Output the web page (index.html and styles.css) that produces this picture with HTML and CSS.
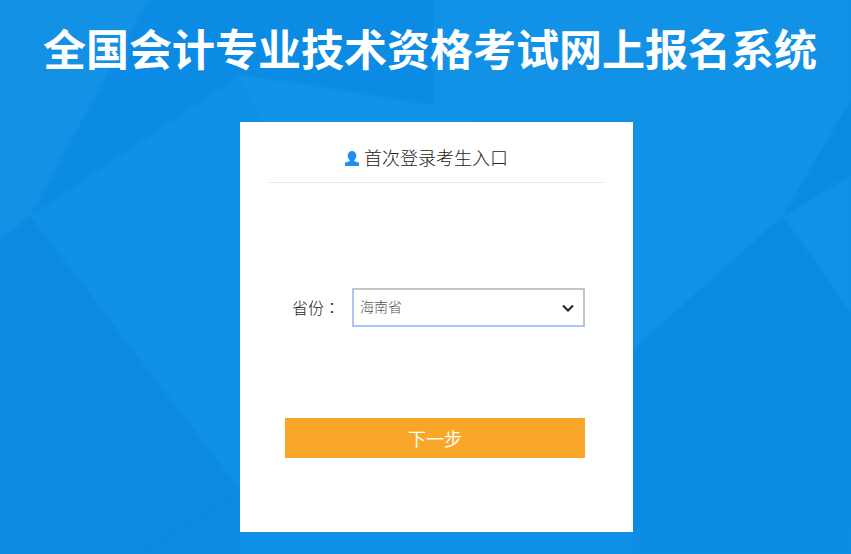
FILE: index.html
```html
<!DOCTYPE html>
<html lang="zh-CN">
<head>
  <meta charset="UTF-8">
  <title>全国会计专业技术资格考试网上报名系统</title>
  <link rel="stylesheet" href="styles.css">
</head>
<body>
  <svg class="bg" viewBox="0 0 851 554" preserveAspectRatio="none" aria-hidden="true">
    <polygon points="0,0 148,0 30,216 0,240" fill="#1391e5"/>
    <polygon points="148,0 433,0 433,105 300,82 240,75 30,216" fill="#0c8be4"/>
    <polygon points="30,216 240,75 262,122 240,300 240,490" fill="#1090e6"/>
    <polygon points="240,75 433,105 477,122 262,122" fill="#1193e7"/>
    <polygon points="433,0 851,0 851,100 783,216 710,280 633,350 633,122 477,122 433,105" fill="#1192e6"/>
    <polygon points="0,240 30,216 240,490 135,554 0,554" fill="#0c8ae3"/>
    <polygon points="135,554 240,490 240,554" fill="#0b89e3"/>
    <polygon points="851,100 851,175 783,216" fill="#0b8ae3"/>
    <polygon points="783,216 851,175 851,314" fill="#1092e6"/>
    <polygon points="783,216 851,314 851,554 633,554 633,350" fill="#0b8ae3"/>
    <polygon points="633,530 851,530 851,554 633,554" fill="#0d8ce4"/>
  </svg>
  <h1 class="title">全国会计专业技术资格考试网上报名系统</h1>
  <main class="card">
    <div class="card-head">
      <svg class="user-icon" viewBox="0 0 14 15" aria-hidden="true">
        <ellipse cx="7" cy="4.8" rx="4.4" ry="4.8" fill="#1e90f0"/>
        <path d="M5 8.5h4l.5 1.7 4.5 1.6V15H0v-3.2l4.500-1.600z" fill="#1e90f0"/>
      </svg>
      <span>首次登录考生入口</span>
    </div>
    <div class="field">
      <label class="field-label" for="province">省份<span class="colon" lang="zh-TW">：</span></label>
      <div class="select-box">
        <span class="select-value" id="province">海南省</span>
        <svg class="chevron" viewBox="0 0 12 8" aria-hidden="true">
          <path d="M1 1.500l5 5 5-5" fill="none" stroke="#222" stroke-width="2"/>
        </svg>
      </div>
    </div>
    <button class="next-btn">下一步</button>
  </main>
</body>
</html>
```

FILE: styles.css
```css
html, body {
  height: 100%;
}
body {
  margin: 0;
  position: relative;
  overflow: hidden;
  background-color: #0f8fe5;
  font-family: "Liberation Sans", "Noto Sans CJK SC", sans-serif;
}
.bg {
  position: absolute;
  left: 0;
  top: 0;
  width: 100%;
  height: 100%;
  filter: blur(1px);
}
.title {
  position: relative;
  margin: 0;
  padding: 26px 0 0 43px;
  height: 96px;
  box-sizing: border-box;
  font-size: 43px;
  line-height: 50px;
  font-weight: bold;
  color: #fff;
  white-space: nowrap;
}
.card {
  position: relative;
  box-sizing: border-box;
  width: 393px;
  height: 410px;
  margin: 26px 0 0 240px;
  padding: 0 29px;
  background-color: #fff;
}
.card-head {
  height: 61px;
  display: flex;
  align-items: center;
  justify-content: center;
  gap: 5px;
  padding-top: 9px;
  box-sizing: border-box;
  border-bottom: 1px solid #e6e6e6;
  font-size: 18px;
  font-weight: 300;
  color: #222;
}
.user-icon {
  width: 14px;
  height: 15px;
  margin: 4px 0 0 -20px;
}
.field {
  display: flex;
  align-items: center;
  margin: 105px 19px 0 23px;
}
.field-label {
  width: 60px;
  font-size: 16px;
  font-weight: 300;
  color: #222;
  padding-bottom: 1px;
}
.colon {
  font-family: "Noto Sans CJK TC", sans-serif;
}
.select-box {
  flex: 1;
  height: 39px;
  box-sizing: border-box;
  display: flex;
  align-items: center;
  justify-content: space-between;
  padding: 0 9px 0 6px;
  border: 2px solid;
  border-color: #c4c4c4 #c4c4c4 #a9c6f5 #a9c6f5;
  font-size: 14px;
  font-weight: 300;
  color: #555;
}
.select-value {
  padding-bottom: 3px;
}
.chevron {
  width: 12px;
  height: 8px;
}
.next-btn {
  display: block;
  width: 300px;
  height: 40px;
  margin: 91px 0 0 16px;
  padding: 0;
  border: 0;
  background-color: #f9a629;
  color: #fff;
  font-family: inherit;
  font-size: 18px;
}
```
